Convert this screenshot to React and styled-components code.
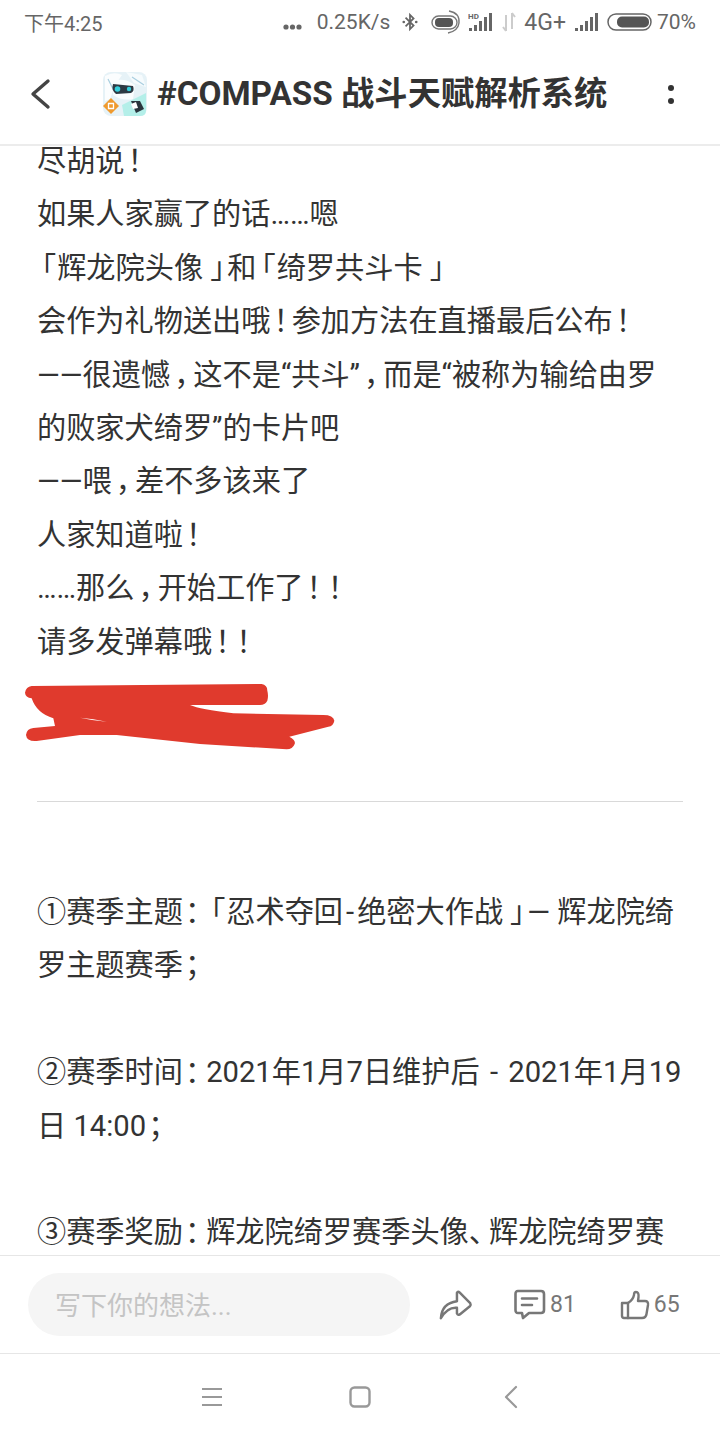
import React from 'react'
import styled, { createGlobalStyle } from 'styled-components'

const GlobalStyle = createGlobalStyle`
  html, body {
    margin: 0;
    padding: 0;
    background: #fff;
  }
  body {
    font-family: "Roboto", "Noto Sans CJK SC", sans-serif;
  }
`

const Screen = styled.div`
  width: 720px;
  height: 1440px;
  display: flex;
  flex-direction: column;
  overflow: hidden;
  background: #fff;
`

const StatusBar = styled.div`
  height: 44px;
  flex: none;
  display: flex;
  align-items: center;
  justify-content: space-between;
  padding: 0 24px;
  color: #666;
  font-size: 20px;
`

const StatusRight = styled.div`
  display: flex;
  align-items: center;
  font-size: 21px;
`

const StatusItem = styled.span`
  display: flex;
  margin-left: ${(p) => p.$gap}px;
  font-size: ${(p) => p.$size || 21}px;
`

const Header = styled.div`
  height: 100px;
  flex: none;
  display: flex;
  align-items: center;
  border-bottom: 2px solid #ececec;
  position: relative;
  z-index: 1;
  background: #fff;
  padding-left: 28px;
`

const BackButton = styled.div`
  width: 74px;
  display: flex;
  flex: none;
`

const Title = styled.div`
  margin-left: 9px;
  font-size: 33.3px;
  line-height: 40px;
  font-weight: 700;
  color: #333;
  white-space: nowrap;
`

const More = styled.div`
  margin-left: auto;
  margin-right: 46px;
  display: flex;
  flex-direction: column;
  gap: 7px;
`

const Dot = styled.i`
  width: 6px;
  height: 6px;
  border-radius: 50%;
  background: #333;
`

const Article = styled.div`
  flex: 1;
  min-height: 0;
  overflow: hidden;
  padding: 0 37px;
  color: #333;
  font-size: 29.2px;
  line-height: 53.4px;
  text-spacing-trim: space-all;
`

const Scrolled = styled.div`
  margin-top: -11px;
`

const Line = styled.div`
  min-height: 53.4px;
  white-space: nowrap;
`

const Punct = styled.span`
  margin-left: ${(p) => p.$l}px;
  margin-right: ${(p) => p.$r}px;
`

const Scribble = styled.svg`
  display: block;
  width: 360px;
  height: 90px;
  margin: 1px 0 41px -37px;
`

const Divider = styled.div`
  height: 1px;
  background: #d9d9d9;
  margin: 0 0 84px;
`

const BottomBar = styled.div`
  height: 99px;
  flex: none;
  box-sizing: border-box;
  display: flex;
  align-items: center;
  padding: 0 41px 0 28px;
  border-top: 1px solid #e6e6e6;
  border-bottom: 1px solid #e6e6e6;
`

const CommentInput = styled.div`
  width: 382px;
  height: 63px;
  flex: none;
  box-sizing: border-box;
  border-radius: 32px;
  background: #f5f5f5;
  color: #c4c4c4;
  font-size: 26px;
  line-height: 66px;
  padding-left: 27px;
`

const Action = styled.div`
  display: flex;
  align-items: center;
  gap: 4px;
  margin-left: ${(p) => p.$gap}px;
  color: #777;
  font-size: 23px;
`

const NavBar = styled.div`
  height: 86px;
  flex: none;
  display: flex;
  align-items: center;
  padding: 0 202px;
  justify-content: space-between;
`

// punctuation in the reference font is narrower than a full em box
const punctMargins = {
  '！': [3, -6],
  '，': [4, -10],
  '：': [2, -8],
  '；': [2, -8],
  '、': [0, -9],
  '「': [-10, 1],
  '」': [7, -12],
  '-': [3, 3],
}

const Text = ({ children }) => {
  const parts = children.split(/([！，：；、「」-])/)
  return parts.map((part, i) => {
    const margins = punctMargins[part]
    if (!margins) return part
    // the first of two exclamation marks sits tighter
    const tight = part === '！' && parts[i + 2] === '！'
    return (
      <Punct key={i} $l={margins[0]} $r={tight ? margins[1] - 5 : margins[1]}>
        {part}
      </Punct>
    )
  })
}

const Chevron = ({ w = 24, h = 32, color = '#444', width = 3.4, d = 'M20 3 L5 16 L20 29' }) => (
  <svg width={w} height={h} viewBox={`0 0 ${w} ${h}`} fill="none" stroke={color} strokeWidth={width} strokeLinecap="round" strokeLinejoin="round">
    <path d={d} />
  </svg>
)

const Logo = () => (
  <svg width="46" height="46" viewBox="0 0 46 46">
    <rect x="1" y="1" width="44" height="44" rx="8" fill="#e6f2f7" />
    <path d="M3 5 Q12 0 20 4 L13 14 L8 28 L3 30Z" fill="#fbfdfe" />
    <path d="M24 1 L40 4 L44 16 L32 12Z" fill="#f6fbfd" />
    <path d="M30 6 L42 14 M6 8 L12 20" stroke="#a9cfe0" strokeWidth="1.200" fill="none" />
    <path d="M20 34 L44 22 L44 40 Q44 45 38 45 L22 45Z" fill="#b4efe9" />
    <path d="M11 10 Q22 6 33 14 L31 28 Q20 30 11 24Z" fill="#fafdfe" />
    <path d="M11 13 L31 15 Q33 20 29 22 L14 23 Q9 19 11 13Z" fill="#2d3a44" />
    <circle cx="15.500" cy="18" r="2.800" fill="#35cfdc" />
    <circle cx="27" cy="18" r="2.200" fill="#35cfdc" />
    <path d="M29 30 L38 30 L42 38 L34 42Z" fill="#2a353d" />
    <path d="M29 33 L34 31 L36 37 L31 38Z" fill="#fff" />
    <path d="M9 27 L17 35 L9 43 L1 35Z" fill="#ef9a2e" />
    <path d="M6.500 32.500 H11.500 V37.500 H6.500Z" fill="none" stroke="#fff" strokeWidth="1.300" />
  </svg>
)

const ThreeDots = () => (
  <svg width="19" height="18" viewBox="0 0 19 18" fill="#666">
    <circle cx="3" cy="14" r="2.600" />
    <circle cx="9.500" cy="14" r="2.600" />
    <circle cx="16" cy="14" r="2.600" />
  </svg>
)

const Signal = ({ hd }) => (
  <svg width="24" height="22" viewBox="0 0 24 22">
    {hd && <text x="0" y="7.500" fontSize="8" fontWeight="700" fontFamily="Roboto" fill="#666">HD</text>}
    <rect x="1" y="17" width="3" height="3" fill="#666" />
    <rect x="6" y="14" width="3" height="6" fill="#666" />
    <rect x="11" y="10" width="3" height="10" fill="#666" />
    <rect x="16" y="6" width="3" height="14" fill="#666" />
    <rect x="21" y="2" width="3" height="18" fill="#666" />
  </svg>
)

const Bluetooth = () => (
  <svg width="16" height="22" viewBox="0 0 18 22" fill="none" stroke="#666" strokeWidth="2">
    <path d="M4 6 L13 15 L9 19 V3 L13 7 L4 16" />
    <circle cx="2" cy="11" r="1.500" fill="#666" stroke="none" />
    <circle cx="16" cy="11" r="1.500" fill="#666" stroke="none" />
  </svg>
)

const Vibrate = () => (
  <svg width="30" height="24" viewBox="0 0 30 24" fill="none">
    <rect x="1" y="6" width="25" height="13" rx="6.500" stroke="#777" strokeWidth="1.400" />
    <rect x="4" y="8" width="18" height="9" rx="4" fill="#555" />
    <path d="M18 1 Q29 3 28 13 Q27 21 17 23" stroke="#777" strokeWidth="1.400" />
  </svg>
)

const DataArrows = () => (
  <svg width="14" height="22" viewBox="0 0 14 22" fill="none" stroke="#ccc" strokeWidth="2">
    <path d="M4 4 V20 M1 16 L4 20 M10 18 V2 M10 2 L13 6" />
  </svg>
)

const Battery = () => (
  <svg width="45" height="18" viewBox="0 0 45 18">
    <rect x="1" y="1" width="43" height="16" rx="8" fill="none" stroke="#666" strokeWidth="1.500" />
    <rect x="10" y="3.500" width="32" height="11" rx="5" fill="#555" />
  </svg>
)

const ShareIcon = () => (
  <svg width="34" height="34" viewBox="0 0 36 34" fill="none" stroke="#777" strokeWidth="2.600" strokeLinejoin="round" strokeLinecap="round">
    <path d="M2 31 Q3 15 19 13 L19 4 Q20 2 22 4 L33 15 Q34 17 33 18 L22 27 Q20 28 19 26 L19 20 Q9 19 2 31Z" />
  </svg>
)

const CommentIcon = () => (
  <svg width="32" height="32" viewBox="0 0 32 32" fill="none" stroke="#777" strokeWidth="2.600" strokeLinejoin="round" strokeLinecap="round">
    <path d="M4 2 H27 Q30 2 30 5 V21 Q30 24 27 24 H15 L9 29 L8 24 H4 Q1.500 24 1.500 21 V5 Q1.500 2 4 2Z" />
    <path d="M8 9.500 H23 M8 16 H18" />
  </svg>
)

const LikeIcon = () => (
  <svg width="30" height="30" viewBox="0 0 30 30" fill="none" stroke="#777" strokeWidth="2.400" strokeLinejoin="round" strokeLinecap="round">
    <path d="M2 13 H8 V28 H4 Q2 28 2 26Z" />
    <path d="M8 13 Q13 10 14 5 Q14 2 16 2 Q19 2 18.500 7 L18 11 H25 Q28.500 11 28 15 L26.500 24 Q26 28 22 28 H8" />
  </svg>
)

const MenuIcon = () => (
  <svg width="20" height="20" viewBox="0 0 20 20" stroke="#999" strokeWidth="2">
    <path d="M0 2 H20 M0 10 H20 M0 18 H20" />
  </svg>
)

const HomeIcon = () => (
  <svg width="22" height="22" viewBox="0 0 22 22" fill="none" stroke="#999" strokeWidth="2.400">
    <rect x="1.500" y="1.500" width="19" height="19" rx="4" />
  </svg>
)

const firstLines = [
  '尽胡说！',
  '如果人家赢了的话……嗯',
  '「辉龙院头像」和「绮罗共斗卡」',
  '会作为礼物送出哦！参加方法在直播最后公布！',
  '——很遗憾，这不是“共斗”，而是“被称为输给由罗',
  '的败家犬绮罗”的卡片吧',
  '——喂，差不多该来了',
  '人家知道啦！',
  '……那么，开始工作了！！',
  '请多发弹幕哦！！',
]

const secondLines = [
  '①赛季主题：「忍术夺回-绝密大作战」— 辉龙院绮',
  '罗主题赛季；',
  '',
  '②赛季时间：2021年1月7日维护后 - 2021年1月19',
  '日 14:00；',
  '',
  '③赛季奖励：辉龙院绮罗赛季头像、辉龙院绮罗赛',
]

const App = () => (
  <Screen>
    <GlobalStyle />
    <StatusBar>
      <span>下午4:25</span>
      <StatusRight>
        <ThreeDots />
        <StatusItem $gap={15}>0.25K/s</StatusItem>
        <StatusItem $gap={12}><Bluetooth /></StatusItem>
        <StatusItem $gap={13}><Vibrate /></StatusItem>
        <StatusItem $gap={7}><Signal hd /></StatusItem>
        <StatusItem $gap={10}><DataArrows /></StatusItem>
        <StatusItem $gap={8} $size={23}>4G+</StatusItem>
        <StatusItem $gap={8}><Signal /></StatusItem>
        <StatusItem $gap={9}><Battery /></StatusItem>
        <StatusItem $gap={5}>70%</StatusItem>
      </StatusRight>
    </StatusBar>
    <Header>
      <BackButton>
        <Chevron />
      </BackButton>
      <Logo />
      <Title>#COMPASS 战斗天赋解析系统</Title>
      <More>
        <Dot />
        <Dot />
      </More>
    </Header>
    <Article>
      <Scrolled>
        {firstLines.map((t) => (
          <Line key={t}><Text>{t}</Text></Line>
        ))}
        <Scribble viewBox="0 0 1080 270">
          <path
            fill="#e03a2d"
            d="M75 68 Q78 50 95 48 L785 42 Q802 45 802 62 Q806 78 802 92 Q795 105 780 105 L570 105 Q600 118 700 130 L970 135 Q1000 135 1003 152 Q1000 168 985 170 L868 200 Q888 210 884 222 Q878 238 860 238 L600 222 L350 195 L240 195 L110 213 Q80 215 78 195 Q80 176 100 174 L165 168 L160 145 Q110 130 95 85 Q76 82 75 68Z"
          />
          <path fill="#fff" d="M240 143 Q280 146 320 155 Q280 152 240 143Z" />
        </Scribble>
        <Divider />
        {secondLines.map((t, i) => (
          <Line key={i}><Text>{t}</Text></Line>
        ))}
      </Scrolled>
    </Article>
    <BottomBar>
      <CommentInput>写下你的想法...</CommentInput>
      <Action $gap={29}>
        <ShareIcon />
      </Action>
      <Action $gap={41}>
        <CommentIcon />
        <span>81</span>
      </Action>
      <Action $gap={44}>
        <LikeIcon />
        <span>65</span>
      </Action>
    </BottomBar>
    <NavBar>
      <MenuIcon />
      <HomeIcon />
      <Chevron w={20} h={24} color="#999" width={2.2} d="M18 2 L8 12 L18 22" />
    </NavBar>
  </Screen>
)

export default App
